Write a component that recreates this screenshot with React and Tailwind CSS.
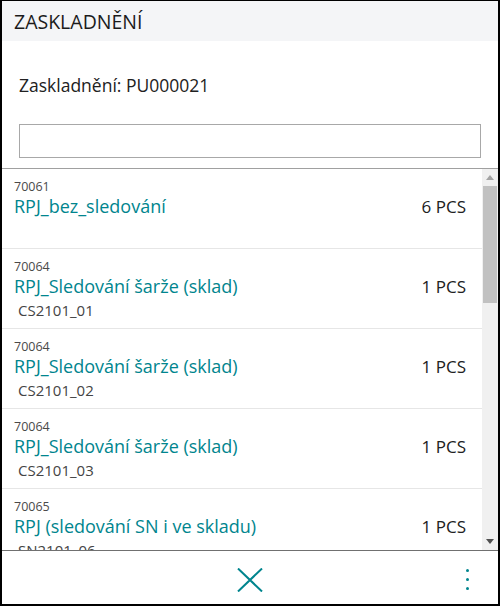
import React from "react";

const rows = [
  { code: "70061", name: "RPJ_bez_sledování", qty: "6 PCS", sub: "" },
  { code: "70064", name: "RPJ_Sledování šarže (sklad)", qty: "1 PCS", sub: "CS2101_01" },
  { code: "70064", name: "RPJ_Sledování šarže (sklad)", qty: "1 PCS", sub: "CS2101_02" },
  { code: "70064", name: "RPJ_Sledování šarže (sklad)", qty: "1 PCS", sub: "CS2101_03" },
  { code: "70065", name: "RPJ (sledování SN i ve skladu)", qty: "1 PCS", sub: "SN2101_06" },
];

export default function App() {
  return (
    <div
      className="w-[500px] h-[606px] bg-white border-t border-l-2 border-r-2 border-b-2 border-black flex flex-col overflow-hidden text-[#212121]"
      style={{ fontFamily: '"Open Sans", "Noto Sans", sans-serif' }}
    >
      <div className="h-[40px] shrink-0 bg-[#f4f5f7] pl-3 pt-[9px] text-[19.5px] leading-6 text-[#1b1b1b]">
        ZASKLADNĚNÍ
      </div>
      <div className="pl-[17px] pt-[32px] text-[17.5px] leading-6">Zaskladnění: PU000021</div>
      <div className="px-[17px] pt-[27px] pb-[10px]">
        <div className="h-[34px] border border-[#a8a8a8] bg-white"></div>
      </div>
      <div className="h-px shrink-0 bg-[#a0a0a0]"></div>
      <div className="flex flex-1 min-h-0">
        <div className="flex-1 min-w-0 overflow-hidden">
          {rows.map((r, i) => (
            <div key={i} className="h-[80px] shrink-0 border-b border-[#e6e6e6] pl-3 pr-4 pt-[11px]">
              <div className="text-[12.5px] leading-[14px] text-[#4a4a4a]">{r.code}</div>
              <div className="flex items-baseline justify-between">
                <span className="text-[18px] leading-6 text-[#00858e]">{r.name}</span>
                <span className="text-[17px] leading-6 text-[#212121]">{r.qty}</span>
              </div>
              {r.sub && (
                <div className="mt-[1px] pl-1 text-[15px] leading-5 text-[#444]">{r.sub}</div>
              )}
            </div>
          ))}
        </div>
        <div className="w-[16px] shrink-0 bg-[#f0f0f0] flex flex-col items-center">
          <div className="h-[17px] w-full flex items-center justify-center">
            <svg width="8" height="5" viewBox="0 0 8 5"><path d="M0 5 L4 0 L8 5 Z" fill="#a3a3a3" /></svg>
          </div>
          <div className="w-[14px] h-[117px] bg-[#c1c1c1]"></div>
          <div className="flex-1"></div>
          <div className="h-[17px] w-full flex items-center justify-center">
            <svg width="8" height="5" viewBox="0 0 8 5"><path d="M0 0 L4 5 L8 0 Z" fill="#505050" /></svg>
          </div>
        </div>
      </div>
      <div className="h-px shrink-0 bg-[#707070]"></div>
      <div className="h-[53px] shrink-0 relative flex items-center justify-center">
        <svg width="26" height="24" viewBox="0 0 26 24" className="mt-[5px]">
          <path d="M1 0.5 L25 23.5 M25 0.5 L1 23.5" stroke="#00858e" strokeWidth="2" fill="none" />
        </svg>
        <div className="absolute right-[29px] top-[18px] flex flex-col gap-[6px]">
          <span className="w-[3px] h-[3px] rounded-full bg-[#00858e]"></span>
          <span className="w-[3px] h-[3px] rounded-full bg-[#00858e]"></span>
          <span className="w-[3px] h-[3px] rounded-full bg-[#00858e]"></span>
        </div>
      </div>
    </div>
  );
}
